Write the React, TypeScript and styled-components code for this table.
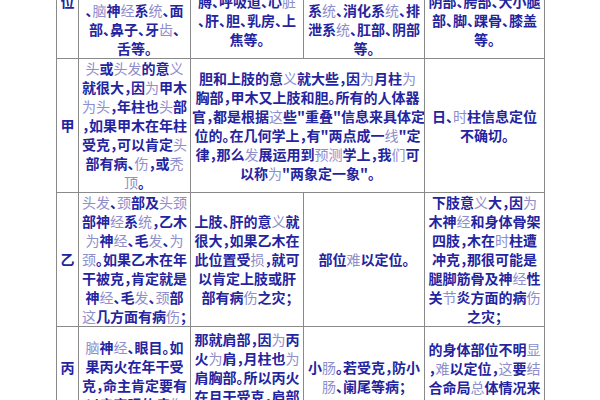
import styled, { createGlobalStyle } from "styled-components";

// {} marks the characters that fell back to the pale font in the original sheet
interface CellData {
  lines: string[];
  span?: number;
  top?: number;
}

const rows: CellData[][] = [
  [
    { lines: ["部", "位"] },
    {
      lines: [
        "{头}部、{头发}、{颈}",
        "部、{头颈}部、大",
        "{脑}、小{脑}、{脑}干",
        "、延{髓}、{脊髓}",
        "、{脑}神{经}系{统}、面",
        "部、鼻子、牙{齿}、",
        "舌等。",
      ],
    },
    {
      lines: [
        "胸部、心{脏}、肺",
        "部、乳房、肋骨",
        "、手臂、肩{胛}、",
        "膊、呼吸道、心{脏}",
        "、肝、胆、乳房、上",
        "焦等。",
      ],
    },
    {
      lines: [
        "腹部、{肠}胃、{脾}",
        "{脏}、肾{脏}、膀胱",
        "、子宫、腰部、",
        "{泌}尿系{统}、生殖",
        "系{统}、消化系{统}、排",
        "泄系{统}、肛部、阴部",
        "等。",
      ],
    },
    {
      lines: [
        "下肢、臀部、大",
        "腿、小腿、膝盖",
        "、足部、骨骼、",
        "阴部、胯部、大小腿",
        "部、脚、踝骨、膝盖",
        "等。",
      ],
    },
  ],
  [
    { lines: ["甲"] },
    {
      lines: [
        "{头}或{头发}的意{义}",
        "就很大，因{为}甲木",
        "{为头}，年柱也{头}部",
        "，如果甲木在年柱",
        "受克，可以肯定{头}",
        "部有病、{伤}，或{秃}",
        "{顶}。",
      ],
    },
    {
      span: 2,
      lines: [
        "胆和上肢的意{义}就大些，因{为}月柱{为}",
        "胸部，甲木又上肢和胆。所有的人体器",
        "官，都是根据{这}些\"重叠\"信息来具体定",
        "位的。在几何学上，有\"两点成一{线}\"定",
        "律，那么{发}展运用到{预测}学上，我{们}可",
        "以称{为}\"两象定一象\"。",
      ],
    },
    { lines: ["日、{时}柱信息定位", "不确切。"] },
  ],
  [
    { lines: ["乙"] },
    {
      lines: [
        "{头发}、{颈}部及{头颈}",
        "部神{经}系{统}，乙木",
        "{为}神{经}、毛{发}、{为}",
        "{颈}。如果乙木在年",
        "干被克，肯定就是",
        "神{经}、毛{发}、{颈}部",
        "{这}几方面有病{伤}；",
      ],
    },
    {
      lines: [
        "上肢、肝的意{义}就",
        "很大，如果乙木在",
        "此位置受{损}，就可",
        "以肯定上肢或肝",
        "部有病{伤}之灾；",
      ],
    },
    { lines: ["部位{难}以定位。"] },
    {
      lines: [
        "下肢意{义}大，因{为}",
        "木神{经}和身体骨架",
        "四肢，木在{时}柱遭",
        "冲克，那很可能是",
        "腿脚筋骨及神{经}性",
        "关{节}炎方面的病{伤}",
        "之灾；",
      ],
    },
  ],
  [
    { top: 31, lines: ["丙"] },
    {
      top: 11,
      lines: [
        "{脑}神{经}、眼目。如",
        "果丙火在年干受",
        "克，命主肯定要有",
        "以肩夜眼的病{伤}",
      ],
    },
    {
      top: 3,
      lines: [
        "那就肩部，因{为}丙",
        "火{为}肩，月柱也{为}",
        "肩胸部。所以丙火",
        "在月干受克，肩部",
      ],
    },
    { top: 31, lines: ["小{肠}。若受克，防小", "{肠}、阑尾等病；"] },
    {
      top: 13,
      lines: [
        "的身体部位不明{显}",
        "，{难}以定位，{这}要{结}",
        "合命局{总}体情况来",
        "定。",
      ],
    },
  ],
];

const colWidths = [22, 112, 113, 121, 120];

const GlobalStyle = createGlobalStyle`
  html, body {
    margin: 0;
    padding: 0;
    background: #fff;
  }
  body {
    overflow: hidden;
  }
`;

const Page = styled.div`
  width: 600px;
  height: 400px;
  overflow: hidden;
  box-sizing: border-box;
  padding-left: 56px;
  background: #fff;
`;

// the sheet is scrolled: the first row is cut by the top edge
const Table = styled.table`
  margin-top: -76px;
  border-collapse: collapse;
  table-layout: fixed;
  width: 489px;
  font-family: "Noto Sans CJK SC", "Noto Sans", sans-serif;
  font-size: 14px;
  font-weight: 700;
  line-height: 19px;
  color: #2424a0;
  font-feature-settings: "halt";
`;

const Col = styled.col<{ $w: number }>`
  width: ${({ $w }) => $w}px;
`;

const Cell = styled.td<{ $top?: number }>`
  border: 1px solid #8a8a8a;
  padding: ${({ $top }) => ($top !== undefined ? `${$top}px 1px 0` : "0 1px")};
  vertical-align: ${({ $top }) => ($top !== undefined ? "top" : "middle")};
  text-align: center;
  white-space: nowrap;
  overflow: hidden;
`;

const Line = styled.div`
  display: block;
`;

const Faint = styled.span`
  color: #8e8ecb;
  font-weight: 400;
`;

const renderLine = (line: string) =>
  line
    .split(/(\{[^}]*\})/)
    .filter(Boolean)
    .map((part, i) =>
      part.startsWith("{") ? <Faint key={i}>{part.slice(1, -1)}</Faint> : part
    );

export default function App() {
  return (
    <Page>
      <GlobalStyle />
      <Table>
        <colgroup>
          {colWidths.map((w, i) => (
            <Col key={i} $w={w} />
          ))}
        </colgroup>
        <tbody>
          {rows.map((row, r) => (
            <tr key={r}>
              {row.map((cell, c) => (
                <Cell key={c} colSpan={cell.span} $top={cell.top}>
                  {cell.lines.map((l, i) => (
                    <Line key={i}>{renderLine(l)}</Line>
                  ))}
                </Cell>
              ))}
            </tr>
          ))}
        </tbody>
      </Table>
    </Page>
  );
}
